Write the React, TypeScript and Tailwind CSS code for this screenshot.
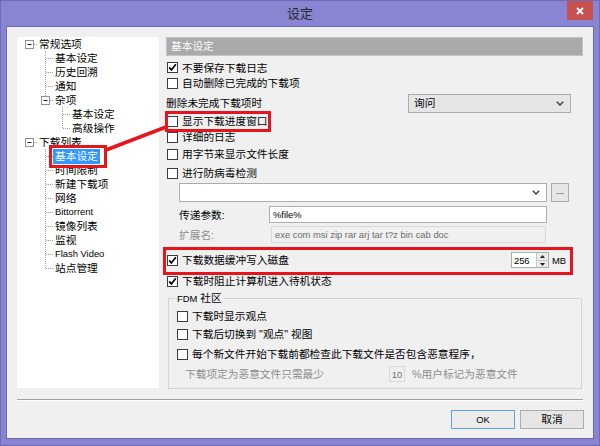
import React from 'react';

type Kind = 'root' | 'l1' | 'l1last' | 'l1box' | 'l2' | 'l2last';

interface TreeRow {
  text: string;
  kind: Kind;
  latin?: boolean;
  selected?: boolean;
}

const treeRows: TreeRow[] = [
  { text: '常规选项', kind: 'root' },
  { text: '基本设定', kind: 'l1' },
  { text: '历史回溯', kind: 'l1' },
  { text: '通知', kind: 'l1' },
  { text: '杂项', kind: 'l1box' },
  { text: '基本设定', kind: 'l2' },
  { text: '高级操作', kind: 'l2last' },
  { text: '下载列表', kind: 'root' },
  { text: '基本设定', kind: 'l1', selected: true },
  { text: '时间限制', kind: 'l1' },
  { text: '新建下载项', kind: 'l1' },
  { text: '网络', kind: 'l1' },
  { text: 'Bittorrent', kind: 'l1', latin: true },
  { text: '镜像列表', kind: 'l1' },
  { text: '监视', kind: 'l1' },
  { text: 'Flash Video', kind: 'l1', latin: true },
  { text: '站点管理', kind: 'l1last' },
];

const dot = { stroke: '#a0a0a0', strokeWidth: 1, strokeDasharray: '1 1' };

function MinusBox({ x }: { x: number }) {
  return (
    <>
      <rect x={x + 0.5} y={3.5} width={8} height={8} fill="#fff" stroke="#919191" />
      <line x1={x + 2.5} y1={7.5} x2={x + 6.5} y2={7.5} stroke="#222" />
    </>
  );
}

// dotted guide lines + expand boxes in front of a tree label
function Guide({ kind }: { kind: Kind }) {
  const w = kind === 'root' ? 22 : kind === 'l2' || kind === 'l2last' ? 55 : 38;
  return (
    <svg width={w} height={14} className="shrink-0">
      {kind === 'root' && (
        <>
          <line x1={17} y1={7.5} x2={21} y2={7.5} {...dot} />
          <MinusBox x={8} />
        </>
      )}
      {(kind === 'l1' || kind === 'l1last') && (
        <>
          <line x1={28.5} y1={0} x2={28.5} y2={kind === 'l1' ? 14 : 8} {...dot} />
          <line x1={29} y1={7.5} x2={36} y2={7.5} {...dot} />
        </>
      )}
      {kind === 'l1box' && (
        <>
          <line x1={28.5} y1={0} x2={28.5} y2={3} {...dot} />
          <line x1={33} y1={7.5} x2={37} y2={7.5} {...dot} />
          <MinusBox x={24} />
        </>
      )}
      {(kind === 'l2' || kind === 'l2last') && (
        <>
          <line x1={45.5} y1={0} x2={45.5} y2={kind === 'l2' ? 14 : 8} {...dot} />
          <line x1={46} y1={7.5} x2={53} y2={7.5} {...dot} />
        </>
      )}
    </svg>
  );
}

function CheckBox({ checked }: { checked?: boolean }) {
  return (
    <span className="flex h-[11px] w-[11px] shrink-0 items-center justify-center border border-[#3c3c3c] bg-white">
      {checked && (
        <svg width="9" height="9" viewBox="0 0 9 9">
          <path d="M1.2 4.4 L3.4 6.9 L7.8 1.2" fill="none" stroke="#000" strokeWidth="1.7" />
        </svg>
      )}
    </span>
  );
}

function Check({ label, checked, className = '' }: { label: React.ReactNode; checked?: boolean; className?: string }) {
  return (
    <div className={`flex h-[16px] items-center gap-[4px] ${className}`}>
      <CheckBox checked={checked} />
      <span>{label}</span>
    </div>
  );
}

function Chevron() {
  return (
    <svg width="8" height="5" viewBox="0 0 8 5" className="shrink-0">
      <path d="M0.8 0.8 L4 4 L7.2 0.8" fill="none" stroke="#444" strokeWidth="1.5" />
    </svg>
  );
}

export default function App() {
  return (
    <div className="relative h-[446px] w-[600px] overflow-hidden border border-[#6f6bbb] bg-[#8985d3] font-['Liberation_Sans','Noto_Sans_CJK_SC',sans-serif] text-[10.7px] leading-none text-black">
      {/* Title bar */}
      <div className="flex h-[25px] items-start">
        <div className="w-[32px]" />
        <div className="flex-1 pt-[6px] text-center text-[13px] text-[#2a2a2a]">设定</div>
        <div className="mr-[6px] flex h-[19px] w-[26px] items-center justify-center bg-[#c75050]">
          <svg width="8" height="8" viewBox="0 0 8 8">
            <path d="M1 1 L7 7 M7 1 L1 7" stroke="#fff" strokeWidth="1.8" />
          </svg>
        </div>
      </div>

      {/* Client area */}
      <div className="mx-[5px] flex h-[413px] flex-col border border-[#6c68b6] bg-[#f0f0f0] pl-[10px] pr-[10px] pt-[10px]">
        <div className="flex h-[352px] gap-[7px]">
          {/* Tree */}
          <div className="h-[351px] w-[142px] shrink-0 bg-white">
            {treeRows.map((r, i) => (
              <div key={i} className="flex h-[14px] items-center">
                <Guide kind={r.kind} />
                {r.selected ? (
                  <span className="-ml-[2px] flex h-[15px] items-center bg-[#3399ff] px-[2px] text-white">{r.text}</span>
                ) : (
                  <span className={r.latin ? 'text-[9.4px]' : ''}>{r.text}</span>
                )}
              </div>
            ))}
          </div>

          {/* Settings page */}
          <div className="flex w-[417px] flex-col">
            <div className="flex h-[19px] items-center border border-[#c4c4c4] bg-[#aaaaaa] pl-[4px] text-white">基本设定</div>
            <Check className="mt-[4px] pl-[1px]" checked label="不要保存下载日志" />
            <Check className="h-[15px] pl-[1px]" label="自动删除已完成的下载项" />
            <div className="mt-[2px] flex h-[19px] items-center justify-between">
              <span>删除未完成下载项时</span>
              <div className="mr-[12px] flex h-[19px] w-[163px] items-center justify-between border border-[#acacac] bg-[#e6e6e6] pl-[5px] pr-[6px]">
                <span>询问</span>
                <Chevron />
              </div>
            </div>
            <Check className="mt-[1px] pl-[1px]" label="显示下载进度窗口" />
            <Check className="pl-[1px]" label="详细的日志" />
            <Check className="mt-[1px] pl-[1px]" label="用字节来显示文件长度" />
            <Check className="mt-[3px] pl-[1px]" label="进行防病毒检测" />
            <div className="mt-[2px] flex h-[19px] items-center gap-[4px] pl-[13px]">
              <div className="flex h-[19px] w-[368px] items-center justify-end border border-[#acacac] bg-white pr-[6px]">
                <Chevron />
              </div>
              <div className="flex h-[19px] w-[18px] items-end justify-center border border-[#acacac] bg-[#e6e6e6] pb-[5px] text-[9px] leading-none">...</div>
            </div>
            <div className="mt-[4px] flex h-[17px] items-center pl-[13px]">
              <span className="w-[90px]">传递参数:</span>
              <div className="flex h-[17px] w-[278px] items-center border border-[#abadb3] bg-white pl-[3px] text-[9.4px]">%file%</div>
            </div>
            <div className="mt-[3px] flex h-[17px] items-center pl-[13px]">
              <span className="w-[92px] text-[#8d8d8d]">扩展名:</span>
              <div className="flex h-[17px] w-[275px] items-center border border-[#d9d9d9] bg-[#f0f0f0] pl-[3px] text-[9.4px] text-[#6d6d6d]">
                exe com msi zip rar arj tar t?z bin cab doc
              </div>
            </div>
            <div className="mt-[9px] flex h-[16px] items-center pl-[1px]">
              <CheckBox checked />
              <span className="ml-[4px] flex-1">下载数据缓冲写入磁盘</span>
              <div className="flex h-[16px] w-[38px] border border-[#abadb3] bg-white">
                <span className="flex flex-1 items-center pl-[2px] text-[9.4px]">256</span>
                <div className="flex w-[12px] flex-col border-l border-[#c8c8c8] bg-[#ececec]">
                  <div className="flex flex-1 items-center justify-center border-b border-[#c8c8c8]">
                    <svg width="5" height="3" viewBox="0 0 5 3"><path d="M0 3 L2.5 0 L5 3 Z" fill="#222" /></svg>
                  </div>
                  <div className="flex flex-1 items-center justify-center">
                    <svg width="5" height="3" viewBox="0 0 5 3"><path d="M0 0 L2.5 3 L5 0 Z" fill="#222" /></svg>
                  </div>
                </div>
              </div>
              <span className="ml-[3px] mr-[17px] text-[9.4px]">MB</span>
            </div>
            <Check className="mt-[5px] pl-[1px]" checked label="下载时阻止计算机进入待机状态" />

            <fieldset className="ml-[2px] mt-[3px] h-[97px] w-[414px] border border-[#d5d5d5]">
              <legend className="ml-[6px] h-[12px] px-[2px] leading-[12px]">
                <span className="text-[9.4px]">FDM</span> 社区
              </legend>
              <div className="flex flex-col pl-[8px]">
                <Check className="mt-[4px]" label="下载时显示观点" />
                <Check className="mt-[2px]" label={'下载后切换到 "观点" 视图'} />
                <Check className="mt-[4px]" label="每个新文件开始下载前都检查此下载文件是否包含恶意程序，" />
                <div className="mt-[4px] flex h-[16px] items-center pl-[8px] text-[#8d8d8d]">
                  <span className="w-[204px]">下载项定为恶意文件只需最少</span>
                  <div className="flex h-[16px] w-[16px] items-center justify-center border border-[#d9d9d9] bg-[#f0f0f0] text-[9.4px] text-[#6d6d6d]">10</div>
                  <span className="ml-[7px]">%用户标记为恶意文件</span>
                </div>
              </div>
            </fieldset>
          </div>
        </div>

        <div className="mt-[10px] border-b border-t border-b-white border-t-[#a0a0a0]" />

        <div className="mt-[9px] flex justify-end gap-[5px]">
          <button className="flex h-[19px] w-[64px] items-center justify-center border border-[#5ea2e6] bg-[#ececec] text-[9.4px]">OK</button>
          <button className="-mr-[1px] flex h-[19px] w-[64px] items-center justify-center border border-[#acacac] bg-[#e6e6e6]">取消</button>
        </div>
      </div>

      {/* Red annotation marks */}
      <svg className="pointer-events-none absolute left-0 top-0" width="600" height="446">
        <g fill="none" stroke="#e8141c" strokeWidth="3">
          <rect x="49.5" y="145.5" width="55" height="20" />
          <rect x="165.5" y="111.5" width="103" height="18" />
          <rect x="163.5" y="247.5" width="407" height="25" />
          <line x1="105" y1="149" x2="165" y2="126" strokeWidth="3.5" />
        </g>
      </svg>
    </div>
  );
}
